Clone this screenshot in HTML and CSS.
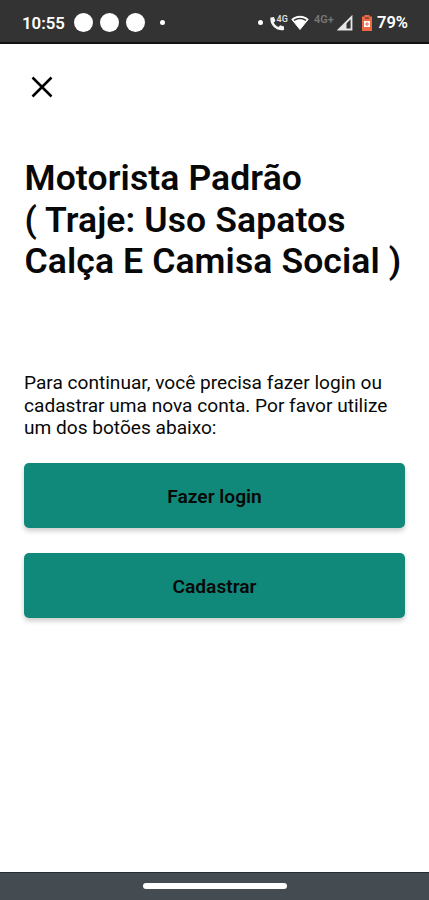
FILE: index.html
```html
<!DOCTYPE html>
<html lang="pt-BR">
<head>
<meta charset="utf-8">
<meta name="viewport" content="width=device-width, initial-scale=1">
<title>Motorista Padrão</title>
<link rel="stylesheet" href="styles.css">
</head>
<body>
<div class="screen">
  <header class="status">
    <span class="time">10:55</span>
    <div class="notices"><i class="disc"></i><i class="disc"></i><i class="disc"></i><i class="dot"></i></div>
    <div class="indicators">
      <i class="dot"></i>
      <svg class="call" width="19" height="18" viewBox="0 0 19 18">
        <path d="M.5 3.500 3.900 3 5.400 6.800 3.800 8.700C4.800 10.600 6.300 12 8.500 12.900L10.200 11.300 14 12.600V16C6.500 17.500-.8 10.500 .5 3.500Z" fill="#f4f4f4"/>
        <text x="6.500" y="8" class="call-tag">4G</text>
      </svg>
      <svg class="wifi" width="18" height="16" viewBox="0 0 18 16">
        <path d="M.8 4.300C5.400.300 12.600.300 17.200 4.300L9 14.500Z" fill="#fff" stroke="#fff" stroke-linejoin="round"/>
        <path d="M2.600 4.800C6.300 2.100 11.700 2.100 15.400 4.800L14.600 5.900C11.400 3.700 6.600 3.700 3.400 5.900Z" fill="#333"/>
      </svg>
      <span class="network">4G+</span>
      <svg class="signal" width="16" height="16" viewBox="0 0 16 16">
        <path d="M2 14.500 14.500 2V14.500Z" fill="none" stroke="#e6e6e6" stroke-width="1.800"/>
        <path d="M1 15 9.500 6.500V15Z" fill="#e6e6e6"/>
      </svg>
      <svg class="battery" width="10" height="16" viewBox="0 0 10 16">
        <path d="M2.500 0H7.500V1.500H10V16H0V1.500H2.500Z" fill="#ee6844"/>
        <path d="M3 3H7" stroke="#333" stroke-width="1"/>
        <path d="M2 6H8V12H2Z" fill="#fff"/>
        <path d="M5 7V11M3 9H7" stroke="#ee6844"/>
      </svg>
      <span class="percent">79%</span>
    </div>
  </header>
  <main class="content">
    <button class="close" aria-label="Fechar">
      <svg width="22" height="22" viewBox="0 0 22 22"><path d="M1.500 1.500 20.500 20.500M20.500 1.500 1.500 20.500" stroke="#000" stroke-width="2.500"/></svg>
    </button>
    <h1 class="title">Motorista Padrão<br>( Traje: Uso Sapatos<br>Calça E Camisa Social )</h1>
    <p class="message">Para continuar, você precisa fazer login ou<br>cadastrar uma nova conta. Por favor utilize<br>um dos botões abaixo:</p>
    <div class="actions">
      <button class="action">Fazer login</button>
      <button class="action">Cadastrar</button>
    </div>
  </main>
  <footer class="navbar"><i class="handle"></i></footer>
</div>
</body>
</html>
```
FILE: styles.css
```css
* { box-sizing: border-box; }
body {
  margin: 0;
  background: #fff;
  color: #080808;
  font-family: Roboto, sans-serif;
}
button { border: 0; padding: 0; font-family: inherit; color: inherit; }
svg { display: block; flex: none; }
.screen { display: flex; flex-direction: column; height: 900px; }
.status {
  display: flex;
  align-items: center;
  height: 44px;
  padding: 3px 21px 0 22px;
  background: #333;
  border-bottom: 2px solid #111;
  color: #fff;
}
.time { width: 43px; font-size: 16.800px; font-weight: 600; white-space: nowrap; }
.notices { display: flex; align-items: center; gap: 7px; margin-left: 9px; }
.disc { width: 19px; height: 19px; border-radius: 50%; background: #fff; }
.dot { width: 5px; height: 5px; border-radius: 50%; background: #fff; }
.notices .dot { margin-left: 8px; }
.indicators { display: flex; align-items: center; margin-left: auto; }
.call { margin-left: 7px; }
.call-tag { fill: #ddd; font-size: 9px; font-weight: 600; }
.wifi { margin-left: 2px; }
.network { width: 22px; margin: -6px 0 0 5px; color: #777; font-size: 11px; font-weight: 600; white-space: nowrap; }
.signal { margin-left: 1px; }
.battery { margin-left: 9px; }
.percent { width: 31px; margin-left: 5px; font-size: 16.500px; font-weight: 600; white-space: nowrap; }
.content { flex: 1; padding: 32px 24px 0; }
.close { display: block; width: 22px; height: 22px; margin-left: 7px; background: none; }
.title {
  margin: 60px 0 0 .5px;
  font-size: 35.500px;
  font-weight: 600;
  line-height: 41.500px;
  letter-spacing: .11px;
  white-space: nowrap;
}
.message {
  margin: 89.500px 0 0;
  font-size: 19.100px;
  line-height: 22.600px;
  white-space: nowrap;
}
.actions { display: grid; gap: 25px; margin-top: 23.500px; }
.action {
  height: 65px;
  padding-top: 2px;
  border-radius: 5px;
  background: #11897a;
  box-shadow: 0 3px 5px rgba(0, 0, 0, .2);
  font-size: 19.200px;
  font-weight: 600;
}
.navbar {
  display: flex;
  justify-content: center;
  height: 28px;
  padding-top: 10px;
  background: #444c52;
  border-top: 1px solid #252c30;
}
.handle { width: 144px; height: 6px; border-radius: 3px; background: #fff; }
```
